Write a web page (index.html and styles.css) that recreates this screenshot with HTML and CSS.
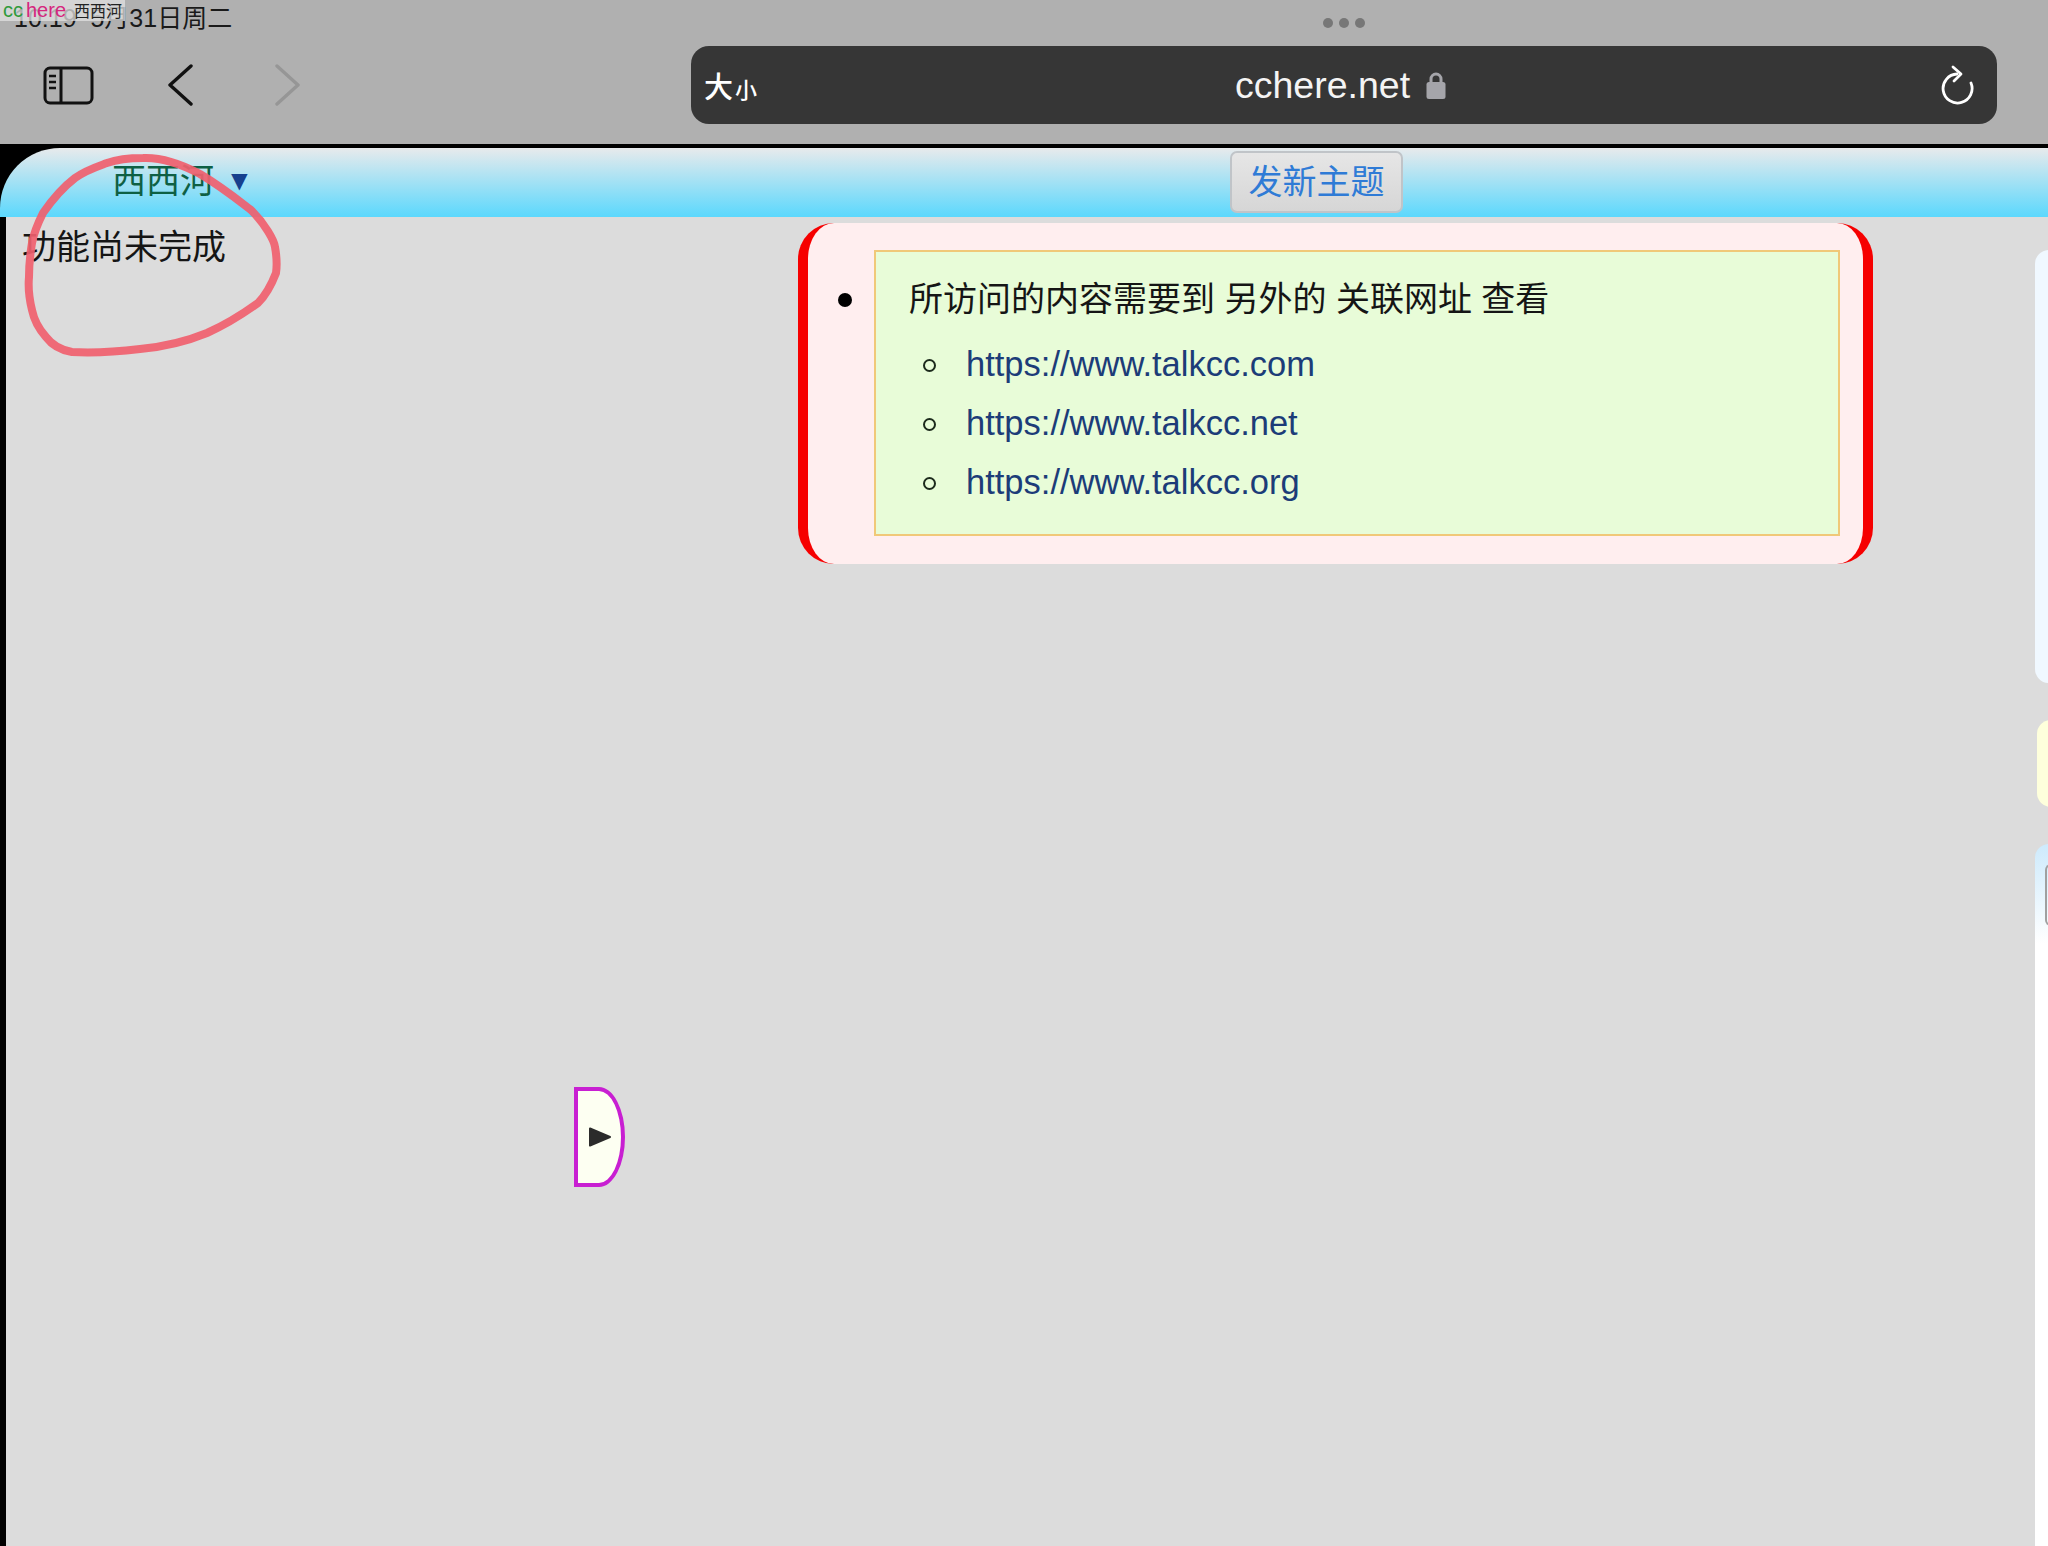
FILE: index.html
```html
<!DOCTYPE html>
<html lang="zh">
  <head>
    <meta charset="UTF-8" />
    <meta name="viewport" content="width=device-width, initial-scale=1.0" />
    <title>cchere.net</title>
    <link rel="stylesheet" href="styles.css">
  </head>
  <body>
    <!-- Browser chrome -->
    <div class="browser-bar">
      <div class="status-time">10:19&nbsp;&nbsp;5月31日周二</div>
      <div class="dots"><span></span><span></span><span></span></div>
      <div class="nav-row">
        <div class="nav-icons">
          <svg class="icon-sidebar" width="52" height="40" viewBox="0 0 52 40" fill="none" stroke="#111" stroke-width="3">
            <rect x="3" y="3" width="47" height="35" rx="5" />
            <path d="M19 3v35" />
            <path d="M7 11h7M7 17h7M7 23h7" stroke-width="2.5" />
          </svg>
          <svg class="icon-back" width="26" height="42" viewBox="0 0 26 42" fill="none" stroke="#111" stroke-width="3.400" stroke-linecap="round" stroke-linejoin="round">
            <path d="M24 2 3 21l21 19" />
          </svg>
          <svg class="icon-forward" width="26" height="42" viewBox="0 0 26 42" fill="none" stroke="#969696" stroke-width="3.400" stroke-linecap="round" stroke-linejoin="round">
            <path d="M3 2l21 19L3 40" />
          </svg>
        </div>
        <div class="address">
          <span class="text-size">大<small>小</small></span>
          <span class="host">cchere.net
            <svg class="icon-lock" width="20" height="28" viewBox="0 0 20 28">
              <path d="M5 12V8a5 5 0 0 1 10 0v4" fill="none" stroke="#a5a5aa" stroke-width="3" />
              <rect x="0.500" y="11" width="19" height="17" rx="2.500" fill="#a5a5aa" />
            </svg>
          </span>
          <svg class="icon-reload" width="34" height="40" viewBox="0 0 34 40" fill="none" stroke="#fff" stroke-width="2.800" stroke-linecap="round" stroke-linejoin="round">
            <path d="M16 9a14.500 14.500 0 1 0 14 9" />
            <path d="M12 2l8 7-7 7" />
          </svg>
        </div>
      </div>
    </div>

    <!-- Page -->
    <div class="page">
      <div class="page-header">
        <div class="board-name">西西河 <span class="caret">▼</span></div>
        <button class="new-topic">发新主题</button>
      </div>
      <div class="page-body">
        <div class="left-col">功能尚未完成</div>
        <div class="main-col">
          <div class="notice">
            <ul class="notice-list">
              <li>
                <div class="notice-box">
                  <div class="notice-title">所访问的内容需要到 另外的 关联网址 查看</div>
                  <ul class="link-list">
                    <li><a href="#">https://www.talkcc.com</a></li>
                    <li><a href="#">https://www.talkcc.net</a></li>
                    <li><a href="#">https://www.talkcc.org</a></li>
                  </ul>
                </div>
              </li>
            </ul>
          </div>
        </div>
        <div class="side-col">
          <div class="side-panel side-blue"></div>
          <div class="side-panel side-yellow"></div>
          <div class="side-panel side-fade"><span class="side-tab"></span></div>
        </div>
      </div>
    </div>

    <!-- Overlays -->
    <div class="logo-tag"><span class="logo-cc">cc</span><span class="logo-here">here</span><span class="logo-name">西西河</span></div>
    <button class="panel-handle">
      <svg width="24" height="22" viewBox="0 0 24 22"><path d="M2 2.500 22 11 2 19.500z" fill="#2b2b2b" stroke="#2b2b2b" stroke-width="2" stroke-linejoin="round" /></svg>
    </button>
    <svg class="scribble" width="300" height="230" viewBox="0 0 300 230" fill="none" stroke="#f0606e" stroke-opacity="0.92" stroke-width="8" stroke-linecap="round" stroke-linejoin="round">
      <path d="M143 18C165 17 185 26 200 34 222 47 238 60 251 70 265 84 274 100 275 107 277 118 277 126 276 133 271 146 266 155 258 163 240 176 225 185 207 193 185 202 162 207 140 209 115 212 92 213 72 212 60 210 52 205 46 197 38 188 34 180 32 170 29 158 28 148 29 137 29 125 30 115 32 103 34 92 38 83 43 73 52 60 62 48 75 38 86 30 96 27 107 23 118 19 130 18 143 18Z" />
    </svg>
  </body>
</html>
```

FILE: styles.css
```css
html,
body {
  margin: 0;
  height: 100%;
}
body {
  width: 2048px;
  height: 1546px;
  overflow: hidden;
  position: relative;
  display: flex;
  flex-direction: column;
  background: #000;
  font-family: "Liberation Sans", "Noto Sans CJK SC", sans-serif;
  color: #111;
}

/* Browser chrome */
.browser-bar {
  height: 144px;
  flex: none;
  background: #b0b0b0;
  margin-bottom: 4px;
  display: flex;
  flex-direction: column;
  position: relative;
}
.status-time {
  position: absolute;
  left: 14px;
  top: 3px;
  font-size: 25px;
  line-height: 30px;
  color: #1a1a1a;
}
.dots {
  height: 46px;
  padding-left: 1323px;
  display: flex;
  gap: 6px;
  align-items: flex-end;
  box-sizing: border-box;
  padding-bottom: 18px;
}
.dots span {
  width: 10px;
  height: 10px;
  border-radius: 50%;
  background: #777;
}
.nav-row {
  display: flex;
  align-items: flex-start;
}
.nav-icons {
  width: 691px;
  height: 78px;
  display: flex;
  align-items: center;
  padding-left: 42px;
  box-sizing: border-box;
}
.icon-sidebar {
  margin-right: 73px;
}
.icon-back {
  margin-right: 81px;
}
.address {
  width: 1306px;
  height: 78px;
  background: #363636;
  border-radius: 18px;
  display: flex;
  align-items: center;
  position: relative;
  color: #fff;
}
.text-size {
  margin-left: 13px;
  font-size: 29px;
  font-weight: 500;
}
.text-size small {
  font-size: 22px;
  margin-left: 2px;
}
.host {
  position: absolute;
  left: 544px;
  top: 17px;
  font-size: 37.500px;
  line-height: 44px;
  color: #f4f4f4;
  white-space: nowrap;
}
.icon-lock {
  vertical-align: -1px;
  margin-left: 5px;
}
.icon-reload {
  margin-left: auto;
  margin-right: 22px;
}

/* Page */
.page {
  flex: 1;
  display: flex;
  flex-direction: column;
  background: #000;
}
.page-header {
  height: 69px;
  flex: none;
  background: linear-gradient(to bottom, #e8eaec, #5bd8fd);
  border-radius: 60px 0 0 0;
  display: flex;
  align-items: flex-start;
  position: relative;
}
.board-name {
  margin-left: 112px;
  margin-top: 11px;
  font-size: 34px;
  line-height: 44px;
  color: #0e6044;
}
.caret {
  font-size: 28px;
  color: #16408e;
  vertical-align: 3px;
  margin-left: 2px;
}
.new-topic {
  position: absolute;
  left: 1230px;
  top: 3px;
  width: 173px;
  height: 62px;
  padding: 0 0 5px;
  border: 2px solid #c0c4c8;
  border-radius: 7px;
  background: linear-gradient(to bottom, #e6e6e6, #d6d6d6);
  color: #2f7bd6;
  font-family: inherit;
  font-size: 34px;
}
.page-body {
  flex: 1;
  margin-left: 6px;
  background: #dcdcdc;
  display: flex;
}
.left-col {
  width: 792px;
  flex: none;
  box-sizing: border-box;
  padding: 5px 0 0 16px;
  font-size: 34px;
  line-height: 50px;
  color: #151515;
}
.main-col {
  width: 1075px;
  flex: none;
  padding-top: 6px;
}
.notice {
  height: 341px;
  box-sizing: border-box;
  border-left: 10px solid #f60000;
  border-right: 10px solid #f60000;
  border-radius: 36px;
  background: #ffeeef;
  padding: 27px 23px 0 66px;
}
.notice-list {
  margin: 0;
  padding: 0;
  list-style: none;
}
.notice-list > li {
  position: relative;
}
.notice-list > li::before {
  content: "";
  position: absolute;
  left: -36px;
  top: 43px;
  width: 14px;
  height: 14px;
  border-radius: 50%;
  background: #000;
}
.notice-box {
  height: 286px;
  box-sizing: border-box;
  border: 2px solid #f0c878;
  background: #e8fcd8;
  padding: 25px 0 0 33px;
}
.notice-title {
  font-size: 34px;
  line-height: 44px;
  color: #151515;
}
.link-list {
  list-style: none;
  margin: 14px 0 0;
  padding: 0 0 0 57px;
}
.link-list li {
  position: relative;
  height: 59px;
  font-size: 34.500px;
  line-height: 59px;
}
.link-list li::before {
  content: "";
  position: absolute;
  left: -43px;
  top: 24px;
  width: 9px;
  height: 9px;
  border: 2.500px solid #1c2a1c;
  border-radius: 50%;
}
.link-list a {
  color: #1c3c78;
  text-decoration: none;
}
.side-col {
  flex: 1;
  padding: 33px 0 0 162px;
  display: flex;
  flex-direction: column;
  gap: 37px;
  overflow: hidden;
}
.side-panel {
  width: 40px;
  border-radius: 14px 0 0 14px;
}
.side-blue {
  height: 433px;
  background: #f0f8ff;
}
.side-yellow {
  height: 87px;
  margin-left: 2px;
  background: #feffdc;
}
.side-fade {
  flex: 1;
  border-radius: 14px 0 0 0;
  background: linear-gradient(to bottom, #cdeafc, #fff 100px);
  position: relative;
}
.side-tab {
  position: absolute;
  left: 10px;
  top: 20px;
  width: 4px;
  height: 58px;
  border: 2px solid #a0a0a0;
  border-right: none;
  border-radius: 6px 0 0 6px;
}

/* Overlays */
.logo-tag {
  position: absolute;
  left: 0;
  top: 0;
  width: 125px;
  height: 21px;
  background: rgba(226, 226, 226, 0.75);
  font-size: 20px;
  line-height: 21px;
  white-space: nowrap;
  overflow: hidden;
  color: #222;
}
.logo-cc {
  color: #2f9a3c;
  margin-left: 3px;
}
.logo-here {
  color: #d6267e;
  margin-left: 3px;
}
.logo-name {
  font-size: 16px;
  margin-left: 8px;
}
.panel-handle {
  position: absolute;
  left: 574px;
  top: 1087px;
  width: 51px;
  height: 100px;
  padding: 0;
  box-sizing: border-box;
  border: 4px solid #c81fd2;
  border-radius: 0 26px 26px 0 / 0 50px 50px 0;
  background: #fdfff2;
  display: flex;
  align-items: center;
  justify-content: center;
}
.scribble {
  position: absolute;
  left: 0;
  top: 140px;
}
```
